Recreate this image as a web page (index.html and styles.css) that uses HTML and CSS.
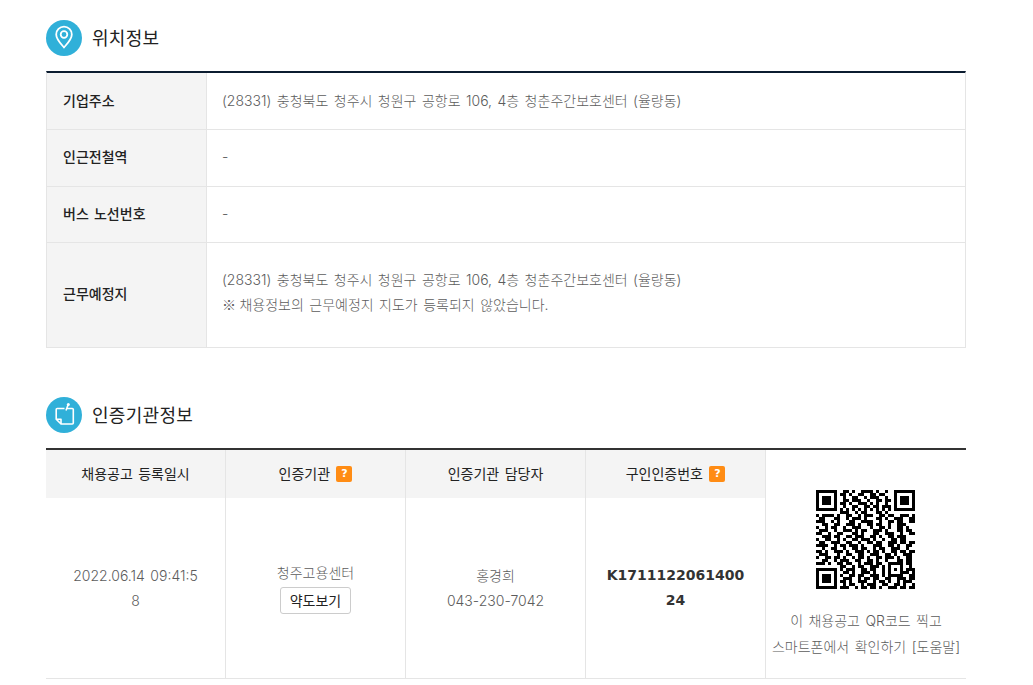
FILE: index.html
```html
<!DOCTYPE html>
<html lang="ko">
<head>
<meta charset="utf-8">
<title>위치정보</title>
<link rel="stylesheet" href="styles.css">
</head>
<body>
<main class="page">
  <section class="section">
    <h2 class="heading">
      <span class="badge">
        <svg viewBox="0 0 36 36" width="36" height="36" fill="none" stroke="#fff">
          <path d="M18 27.500c-1-1.600-7.800-7.600-7.800-13a7.800 7.800 0 0 1 15.600 0c0 5.400-6.800 11.400-7.800 13z" stroke-width="1.800" stroke-linejoin="round"/>
          <circle cx="18" cy="14.500" r="3.300" stroke-width="1.800"/>
        </svg>
      </span>
      <span class="title">위치정보</span>
    </h2>
    <table class="info">
      <tbody>
        <tr class="row-a"><th>기업주소</th><td>(28331) 충청북도 청주시 청원구 공항로 106, 4층 청춘주간보호센터 (율량동)</td></tr>
        <tr class="row-b"><th>인근전철역</th><td>-</td></tr>
        <tr class="row-c"><th>버스 노선번호</th><td>-</td></tr>
        <tr class="row-d"><th>근무예정지</th><td>(28331) 충청북도 청주시 청원구 공항로 106, 4층 청춘주간보호센터 (율량동)<br><span class="mark">※</span> 채용정보의 근무예정지 지도가 등록되지 않았습니다.</td></tr>
      </tbody>
    </table>
  </section>
  <section class="section section-second">
    <h2 class="heading">
      <span class="badge">
        <svg viewBox="0 0 36 36" width="36" height="36" fill="none" stroke="#fff" stroke-width="1.600" stroke-linejoin="round">
          <path d="M21 11.500H26.300a1 1 0 0 1 1 1V26a1 1 0 0 1-1 1H15l-4.800-4.800V12.500a1 1 0 0 1 1-1H18.500"/>
          <path d="M10.200 22.200h4.800V27"/>
          <path d="M20 13.500 22 8"/>
          <circle cx="22.300" cy="7.500" r="1.500" fill="#fff" stroke="none"/>
        </svg>
      </span>
      <span class="title">인증기관정보</span>
    </h2>
    <table class="cert">
      <thead>
        <tr>
          <th>채용공고 등록일시</th>
          <th>인증기관 <span class="help">?</span></th>
          <th>인증기관 담당자</th>
          <th>구인인증번호 <span class="help">?</span></th>
          <td class="qr" rowspan="2">
            <svg class="qr-code" viewBox="0 0 33 33" width="99" height="99" fill="none" stroke="#000" stroke-width="1" shape-rendering="crispEdges">
              <path d="M0 .5h7m2 0h2m1 0h1m2 0h4m1 0h1m2 0h1m2 0h7M0 1.500h1m5 0h1m1 0h2m1 0h1m2 0h2m2 0h2m1 0h2m3 0h1m5 0h1M0 2.500h1m1 0h3m1 0h1m2 0h1m2 0h2m2 0h1m1 0h3m2 0h1m2 0h1m1 0h3m1 0h1M0 3.500h1m1 0h3m1 0h1m2 0h2m1 0h3m2 0h1m2 0h2m1 0h2m1 0h1m1 0h3m1 0h1M0 4.500h1m1 0h3m1 0h1m1 0h2m1 0h1m2 0h3m1 0h1m1 0h1m2 0h1m2 0h1m1 0h3m1 0h1M0 5.500h1m5 0h1m2 0h1m2 0h2m2 0h2m1 0h2m1 0h3m1 0h1m5 0h1M0 6.500h7m1 0h1m1 0h1m1 0h1m1 0h1m1 0h1m1 0h1m1 0h1m1 0h1m1 0h1m1 0h7"/>
              <path d="M8 7.500h3m2 0h1m1 0h2m3 0h2m1 0h1M0 8.500h1m1 0h4m1 0h1m2 0h2m2 0h1m1 0h3m2 0h2m1 0h2m2 0h3m1 0h1M1 9.500h2m3 0h2m2 0h1m1 0h3m1 0h1m3 0h2m1 0h1m2 0h3m2 0h2M0 10.500h3m2 0h1m1 0h1m3 0h2m2 0h4m2 0h1m2 0h2m1 0h2m2 0h2M2 11.500h2m2 0h2m2 0h3m1 0h1m2 0h2m1 0h2m2 0h1m2 0h3M0 12.500h1m2 0h1m1 0h2m2 0h1m2 0h3m3 0h1m2 0h2m1 0h1m2 0h2m1 0h1M1 13.500h3m2 0h1m2 0h3m1 0h1m1 0h2m2 0h3m1 0h1m3 0h2m1 0h2M0 14.500h2m2 0h1m2 0h2m3 0h2m1 0h1m3 0h2m2 0h3m2 0h1m2 0h2M2 15.500h3m1 0h2m2 0h2m1 0h3m2 0h2m1 0h1m2 0h2m1 0h3M0 16.500h1m2 0h2m2 0h1m1 0h1m2 0h2m1 0h3m1 0h1m2 0h1m2 0h2m1 0h2M1 17.500h2m2 0h3m2 0h2m2 0h1m2 0h2m1 0h2m2 0h3m1 0h2m1 0h2M0 18.500h4m2 0h1m1 0h2m1 0h3m1 0h1m3 0h3m2 0h2m1 0h1m2 0h2M2 19.500h1m2 0h2m2 0h1m2 0h2m1 0h2m2 0h1m1 0h2m2 0h3m2 0h1M0 20.500h2m1 0h1m2 0h3m1 0h1m2 0h3m1 0h1m1 0h2m1 0h1m2 0h2m1 0h2m1 0h2M1 21.500h3m3 0h1m2 0h2m2 0h2m2 0h3m2 0h2m1 0h1m2 0h3M0 22.500h1m2 0h2m1 0h2m1 0h1m2 0h1m1 0h2m1 0h1m2 0h2m1 0h3m1 0h1m2 0h2M2 23.500h2m2 0h1m1 0h3m2 0h2m2 0h2m1 0h1m2 0h1m3 0h2m1 0h2"/>
              <path d="M0 24.500h3m1 0h1m2 0h2m1 0h2m2 0h1m1 0h3m1 0h2m2 0h5m1 0h2M8 25.500h2m2 0h1m1 0h2m2 0h3m1 0h1m1 0h1m3 0h1m2 0h1M0 26.500h7m1 0h1m1 0h3m2 0h2m1 0h2m2 0h1m1 0h1m1 0h1m1 0h1m1 0h3M0 27.500h1m5 0h1m2 0h2m1 0h1m2 0h3m1 0h1m2 0h1m1 0h1m3 0h3m1 0h1M0 28.500h1m1 0h3m1 0h1m1 0h1m2 0h2m1 0h2m2 0h3m1 0h1m1 0h5m2 0h2M0 29.500h1m1 0h3m1 0h1m2 0h3m2 0h1m1 0h2m1 0h2m2 0h2m2 0h3m1 0h2M0 30.500h1m1 0h3m1 0h1m1 0h2m1 0h1m2 0h3m2 0h1m1 0h2m1 0h1m2 0h1m1 0h3M0 31.500h1m5 0h1m2 0h1m1 0h2m2 0h1m1 0h3m2 0h2m2 0h2m1 0h1m2 0h1M0 32.500h7m1 0h3m2 0h1m1 0h2m1 0h2m1 0h1m2 0h3m1 0h2m1 0h2"/>
            </svg>
            <p class="qr-note">이 채용공고 QR코드 찍고<br>스마트폰에서 확인하기 [도움말]</p>
          </td>
        </tr>
        <tr class="cert-body">
          <td class="cert-date">2022.06.14 09:41:58</td>
          <td class="cert-org">청주고용센터<br><button class="map-btn" type="button">약도보기</button></td>
          <td>홍경희<br>043-230-7042</td>
          <td class="cert-no">K171112206140024</td>
        </tr>
      </thead>
    </table>
  </section>
</main>
</body>
</html>
```
FILE: styles.css
```css
* {
  box-sizing: border-box;
}

html, body {
  margin: 0;
  background: #fff;
}

body {
  font-family: Inter, "Noto Sans CJK KR", "Noto Sans", sans-serif;
  font-size: 14px;
  line-height: 25px;
  word-spacing: 1.5px;
  color: #5c5c5c;
}

.page {
  width: 920px;
  margin-left: 46px;
  padding-top: 20px;
}

.section-second {
  margin-top: 49px;
}

.heading {
  display: flex;
  align-items: center;
  gap: 10px;
  height: 36px;
  margin: 0 0 15px;
  font-size: 18px;
  font-weight: 400;
  letter-spacing: .3px;
  color: #222;
}

.badge {
  display: block;
  width: 36px;
  height: 36px;
  border-radius: 50%;
  background: #30b0d9;
}

.badge svg {
  display: block;
}

table {
  width: 920px;
  border-collapse: separate;
  border-spacing: 0;
  table-layout: fixed;
}

.info {
  border-top: 2px solid #0b1c30;
  border-left: 1px solid #e5e5e5;
  border-right: 1px solid #e5e5e5;
}

.info th {
  width: 160px;
  padding: 0 16px 2px;
  text-align: left;
  font-weight: 500;
  color: #222;
  background: #f4f4f4;
  border-right: 1px solid #e5e5e5;
  border-bottom: 1px solid #e5e5e5;
}

.info td {
  padding: 0 15px 2px;
  font-weight: 300;
  border-bottom: 1px solid #e5e5e5;
}

.row-a { height: 57px; }
.row-b { height: 57px; }
.row-c { height: 56px; }
.row-d { height: 105px; }

.info .row-b th,
.info .row-b td,
.info .row-d th {
  padding-bottom: 4px;
}

.info .row-d td {
  padding-bottom: 6px;
}

.mark {
  margin-right: -2px;
  font-family: "Noto Sans CJK KR", sans-serif;
}

.cert {
  border-top: 2px solid #333;
}

.cert th {
  height: 48px;
  padding: 0 0 2px;
  font-weight: 400;
  color: #222;
  text-align: center;
  background: #f4f4f4;
  border-right: 1px solid #e5e5e5;
}

.cert td {
  padding: 0 20px;
  height: 181px;
  font-weight: 300;
  text-align: center;
  word-break: break-all;
  border-right: 1px solid #e5e5e5;
  border-bottom: 1px solid #e5e5e5;
}

.cert th, .cert-body td {
  width: 180px;
}

.cert .cert-date {
  padding: 0 26px;
}

.cert .cert-org {
  padding-bottom: 2px;
}

.cert .qr {
  width: 200px;
  height: 229px;
  padding: 40px 0 0;
  vertical-align: top;
  border-right: 0;
}

.qr-code {
  display: block;
  margin-left: 50px;
}

.qr-note {
  margin: 19px 0 0;
  line-height: 26px;
}

.help {
  display: inline-block;
  width: 16px;
  height: 16px;
  margin-left: 1px;
  border-radius: 2px;
  background: #ff8c14;
  color: #fff;
  font-family: "DejaVu Sans", sans-serif;
  font-size: 11px;
  font-weight: 700;
  line-height: 16px;
  vertical-align: 2px;
}

.map-btn {
  display: inline-block;
  width: 71px;
  height: 27px;
  margin-top: 2px;
  padding: 0;
  border: 1px solid #ccc;
  border-radius: 3px;
  background: #fff;
  font: 400 14px/25px "Noto Sans CJK KR", sans-serif;
  color: #222;
}

.cert .cert-no {
  padding: 0 20px;
  font-family: "DejaVu Sans", "Noto Sans CJK KR", sans-serif;
  font-weight: 700;
  color: #333;
}
```
